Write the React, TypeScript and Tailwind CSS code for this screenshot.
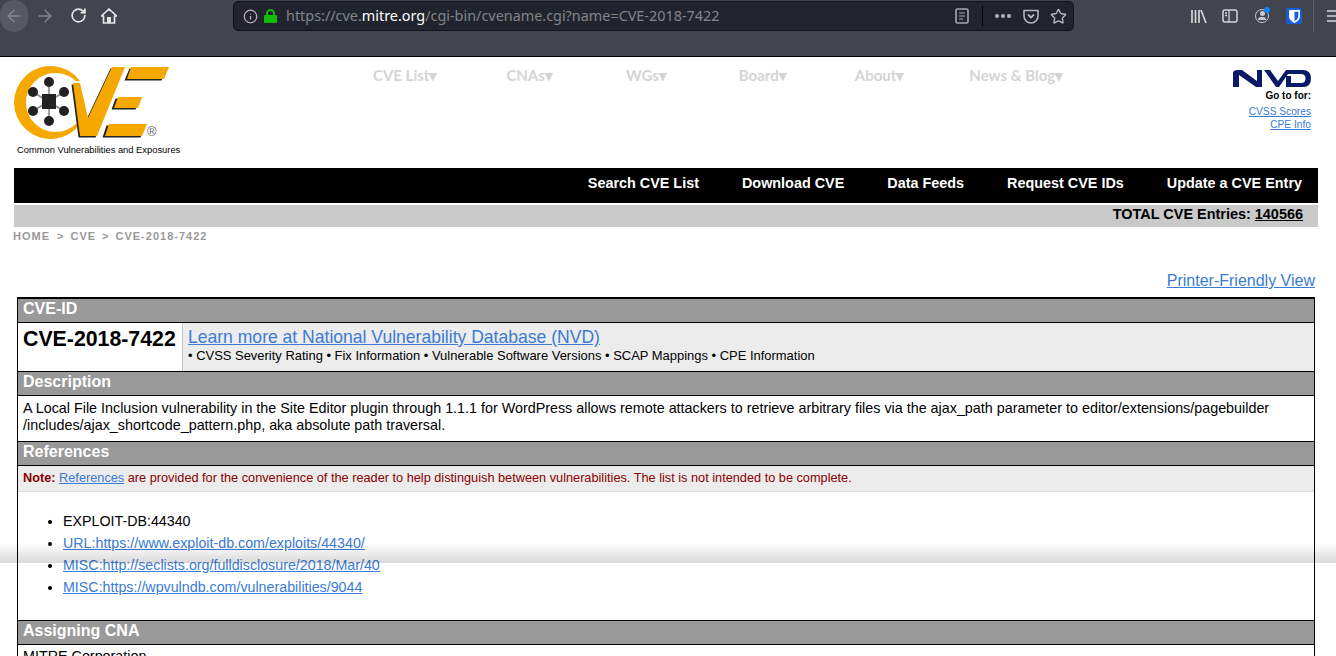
import React from "react";
import { ArrowLeft, ArrowRight, RotateCw, Info, Star } from "lucide-react";

const Head = ({ children, h = "h-[24px]" }: { children: React.ReactNode; h?: string }) => (
  <div className={`${h} bg-[#999999] border-t border-black text-white font-bold text-[16px] leading-[20px] px-[5px]`}>{children}</div>
);

const Logo = () => (
  <svg width="158" height="74" viewBox="0 0 158 74" className="block">
    <path d="M66 15 A36.5 36.5 0 1 0 66 58 L62 57.7 A29.5 29.5 0 1 1 62 15.3 Z" fill="#f5a800" />
    <g stroke="#8a8a8a" strokeWidth="1.6">
      <line x1="35" y1="16" x2="35" y2="55" /><line x1="19" y1="26" x2="50" y2="45" /><line x1="50" y1="26" x2="19" y2="45" />
    </g>
    <g fill="#222">
      <circle cx="35" cy="16" r="5" /><circle cx="35" cy="55" r="5" /><circle cx="19" cy="26" r="5" /><circle cx="50" cy="26" r="5" /><circle cx="19" cy="45" r="5" /><circle cx="50" cy="45" r="5" />
      <rect x="28" y="28" width="14" height="15" />
    </g>
    <path d="M59 17 L66 17 L74 52 L98 1 L111 1 L83 70 L66 70 Z" fill="#222" transform="translate(-1.5 1.5)" />
    <path d="M59 17 L66 17 L74 52 L98 1 L111 1 L83 70 L66 70 Z" fill="#f5a800" />
    <g fill="#222" transform="translate(-1.5 1.5)">
      <path d="M117 1 L154 1 L149 13 L112 13 Z M103 31 L128 31 L123 42 L99 42 Z M94 58 L133 58 L128 70 L90 70 Z" />
    </g>
    <path d="M117 1 L155 1 L150 13 L113 13 Z M104 31 L128 31 L124 42 L100 42 Z M95 58 L133 58 L128 70 L91 70 Z" fill="#f5a800" />
  </svg>
);

const Nvd = () => (
  <svg width="78" height="18" viewBox="0 0 78 18" className="block">
    <path d="M0 18 L0 4 Q0 1 5 1 L9 1 L24 12 L24 1 L29 1 L29 18 L23 18 L6 6 L6 18 Z" fill="#0a1a66" />
    <path d="M31 1 L37 1 L45 12 L53 1 L70 1 Q78 1 78 9.5 Q78 18 70 18 L53 18 L53 7 L58 7 L58 14 L68 14 Q72.5 14 72.5 9.5 Q72.5 5 68 5 L55 5 L46 18 L43 18 Z" fill="#0a1a66" />
  </svg>
);

const A = ({ children, className = "" }: { children: React.ReactNode; className?: string }) => (
  <a className={`text-[#3a7bd5] underline ${className}`}>{children}</a>
);

export default function App() {
  const nav = ["CVE List▾", "CNAs▾", "WGs▾", "Board▾", "About▾", "News & Blog▾"];
  const navGaps = ["w-[373px]", "w-[69px]", "w-[73px]", "w-[72px]", "w-[68px]", "w-[65px]"];
  return (
    <div className="relative w-[1336px] h-[656px] overflow-hidden bg-white font-['Liberation_Sans',Arial,sans-serif] text-black">
      <div className="h-[57px] bg-[#42454e] border-b border-black flex items-start relative">
        <div className="w-[28px] h-[32px] rounded-full bg-[#565961] flex items-center justify-center shrink-0">
          <ArrowLeft size={20} strokeWidth={1.6} className="text-[#85878c]" />
        </div>
        <ArrowRight size={20} strokeWidth={1.6} className="text-[#85878c] ml-[7px] mt-[6px] shrink-0" />
        <RotateCw size={17} className="text-[#e5e5e6] ml-[15px] mt-[7px] shrink-0" strokeWidth={2.4} />
        <svg width="16" height="16" viewBox="0 0 16 16" className="ml-[14px] mt-[8px] shrink-0"><path d="M8 1 L15.5 8 L13.5 8 L13.5 15 L2.5 15 L2.5 8 L0.5 8 Z" fill="none" stroke="#e5e5e6" strokeWidth="1.7" strokeLinejoin="round" /><rect x="6" y="9" width="4" height="6" fill="#e5e5e6" /></svg>
        <div className="ml-[116px] mt-[1px] w-[841px] h-[30px] shrink-0 bg-[#21242e] border border-[#111318] rounded-[5px] flex items-center pl-[9px]">
          <Info size={15} className="text-[#b5b6ba]" />
          <svg width="13" height="14" viewBox="0 0 13 14" className="ml-[6px]"><path d="M3 7V4.5a3.5 3.5 0 0 1 7 0V7" fill="none" stroke="#12bc00" strokeWidth="2" /><rect x="0" y="6" width="13" height="8" rx="1" fill="#12bc00" /></svg>
          <span className="ml-[9px] text-[14.4px] text-[#83858a] font-['Noto_Sans',sans-serif] whitespace-nowrap">https://cve.<span className="text-white">mitre.org</span>/cgi-bin/cvename.cgi?name=CVE-2018-7422</span>
          <div className="ml-auto flex items-center">
            <svg width="14" height="16" viewBox="0 0 14 16"><rect x="1" y="1" width="12" height="14" rx="1.5" fill="none" stroke="#a8a9ad" strokeWidth="1.6" /><path d="M4 5h6M4 8h6M4 11h4" stroke="#a8a9ad" strokeWidth="1.2" /></svg>
            <div className="w-px h-[20px] bg-black ml-[13px]" />
            <span className="flex gap-[2px] ml-[12px]"><i className="block w-[4px] h-[4px] rounded-full bg-[#b5b6ba]" /><i className="block w-[4px] h-[4px] rounded-full bg-[#b5b6ba]" /><i className="block w-[4px] h-[4px] rounded-full bg-[#b5b6ba]" /></span>
            <svg width="16" height="15" viewBox="0 0 16 15" className="ml-[12px]"><path d="M1 1.5 H15 V7 A7 7 0 0 1 1 7 Z" fill="none" stroke="#b5b6ba" strokeWidth="1.6" strokeLinejoin="round" /><path d="M5 5.5 L8 8.5 L11 5.5" fill="none" stroke="#b5b6ba" strokeWidth="1.8" /></svg>
            <Star size={17} className="text-[#b5b6ba] ml-[11px] mr-[6px]" strokeWidth={2} />
          </div>
        </div>
        <svg width="16" height="15" viewBox="0 0 16 15" className="ml-[117px] mt-[9px] shrink-0"><path d="M1 1v13M4.5 1v13M8 1v13M10 1l5 13" stroke="#d5d5d7" strokeWidth="1.7" fill="none" /></svg>
        <svg width="16" height="14" viewBox="0 0 16 14" className="ml-[15px] mt-[9px] shrink-0"><rect x="1" y="1" width="14" height="12" rx="2" fill="none" stroke="#d5d5d7" strokeWidth="1.5" /><path d="M7 1v12M3 4h2M3 6.5h2" stroke="#d5d5d7" strokeWidth="1.3" /></svg>
        <div className="relative ml-[17px] mt-[9px] w-[14px] h-[14px] shrink-0 rounded-full border-[1.5px] border-[#c8c8ca]">
          <div className="w-[5px] h-[5px] rounded-full bg-[#c8c8ca] mx-auto mt-[1px]" />
          <div className="w-[8px] h-[3px] rounded-t-full bg-[#c8c8ca] mx-auto mt-[1px]" />
          <div className="absolute -top-[3px] -right-[2px] w-[6px] h-[6px] rounded-full bg-[#0a84ff]" />
        </div>
        <div className="ml-[17px] mt-[8px] w-[16px] h-[16px] shrink-0 rounded-[2px] bg-[#175ddc] flex items-center justify-center">
          <svg width="11" height="13" viewBox="0 0 10 12"><path d="M0 0H10V6C10 9 7 11 5 12C3 11 0 9 0 6Z" fill="#fff" /><path d="M5 1.5H8.5V6C8.5 8 6.5 9.5 5 10.3Z" fill="#175ddc" /></svg>
        </div>
        <div className="w-px h-[32px] bg-[#5f6168] ml-[11px] shrink-0" />
        <svg width="16" height="14" viewBox="0 0 16 14" className="ml-[13px] mt-[9px] shrink-0"><path d="M0 2h16M0 7h16M0 12h16" stroke="#d5d5d7" strokeWidth="1.7" /></svg>
      </div>

      <div className="flex h-[111px]">
        <div className="ml-[14px] pt-[9px] w-[167px] shrink-0 relative">
          <Logo />
          <span className="absolute left-[133px] top-[68px] text-[13px] leading-none text-[#666]">®</span>
          <div className="text-[9.35px] leading-none mt-[6px] ml-[3px] whitespace-nowrap">Common Vulnerabilities and Exposures</div>
        </div>
        <div className="flex items-start -ml-[181px] pt-[9px] font-['Lato',sans-serif] text-[15px] font-bold text-[#d4d4d4] leading-[18px]">
          {nav.map((n, i) => (
            <React.Fragment key={n}>
              <span className={`${navGaps[i]} shrink-0`} />
              <span className="whitespace-nowrap">{n}</span>
            </React.Fragment>
          ))}
        </div>
        <div className="ml-auto mr-[25px] pt-[12px] flex flex-col items-end text-[10.2px] leading-[12px]">
          <Nvd />
          <div className="font-bold text-[10px] mt-[3px] mb-[4px]">Go to for:</div>
          <A>CVSS Scores</A>
          <A className="mt-[1px]">CPE Info</A>
        </div>
      </div>

      <div className="ml-[14px] mr-[18px] h-[35px] bg-black flex justify-end gap-[43px] pr-[16px] text-white font-bold text-[14.4px] leading-[31px]">
        <span>Search CVE List</span><span>Download CVE</span><span>Data Feeds</span><span>Request CVE IDs</span><span>Update a CVE Entry</span>
      </div>
      <div className="ml-[14px] mr-[18px] mt-[2px] h-[22px] bg-[#c9c9c9] flex justify-end pr-[15px] font-bold text-[14.45px] leading-[18px]">
        TOTAL CVE Entries:&nbsp;<span className="underline">140566</span>
      </div>
      <div className="ml-[13px] mt-[3px] text-[11px] leading-[13px] font-bold tracking-[1px] text-[#999]">HOME<span className="ml-[7px] mr-[6px]">&gt;</span>CVE<span className="mx-[6px]">&gt;</span>CVE-2018-7422</div>

      <div className="mt-[29px] mr-[21px] text-right text-[16px] leading-[18px]"><A>Printer-Friendly View</A></div>

      <div className="ml-[17px] mt-[7px] w-[1298px] border-l border-r border-t border-black text-[14.33px]">
        <Head>CVE-ID</Head>
        <div className="flex h-[49px] border-t border-black">
          <div className="w-[165px] pl-[5px] pt-[2px] font-bold text-[21.3px] leading-[28px] border-r border-[#c8c8c8]">CVE-2018-7422</div>
          <div className="flex-1 bg-[#ececec] pl-[5px] pt-[4px]">
            <A className="text-[17.56px] leading-[20px] block w-fit">Learn more at National Vulnerability Database (NVD)</A>
            <div className="text-[12.96px] leading-[16px] mt-[1px]">• CVSS Severity Rating • Fix Information • Vulnerable Software Versions • SCAP Mappings • CPE Information</div>
          </div>
        </div>
        <Head>Description</Head>
        <div className="h-[46px] border-t border-black px-[5px] pt-[4px] leading-[17px]">
          A Local File Inclusion vulnerability in the Site Editor plugin through 1.1.1 for WordPress allows remote attackers to retrieve arbitrary files via the ajax_path parameter to editor/extensions/pagebuilder<br />/includes/ajax_shortcode_pattern.php, aka absolute path traversal.
        </div>
        <Head>References</Head>
        <div className="h-[26px] border-t border-black bg-[#ececec] px-[5px] text-[12.74px] leading-[24px] text-[#8b0000]">
          <b>Note:</b> <A>References</A> are provided for the convenience of the reader to help distinguish between vulnerabilities. The list is not intended to be complete.
        </div>
        <ul className="h-[129px] border-t border-[#ddd] pl-[45px] pt-[18px] list-disc text-[14.26px] leading-[22px]">
          <li>EXPLOIT-DB:44340</li>
          <li><A>URL:https://www.exploit-db.com/exploits/44340/</A></li>
          <li><A>MISC:http://seclists.org/fulldisclosure/2018/Mar/40</A></li>
          <li><A>MISC:https://wpvulndb.com/vulnerabilities/9044</A></li>
        </ul>
        <Head>Assigning CNA</Head>
        <div className="border-t border-black px-[5px] pt-[3px] leading-[17px]">MITRE Corporation</div>
      </div>

      <div className="absolute left-0 right-0 top-[543px] h-[20px] bg-gradient-to-b from-[#00000000] to-[#00000026]" />
    </div>
  );
}
